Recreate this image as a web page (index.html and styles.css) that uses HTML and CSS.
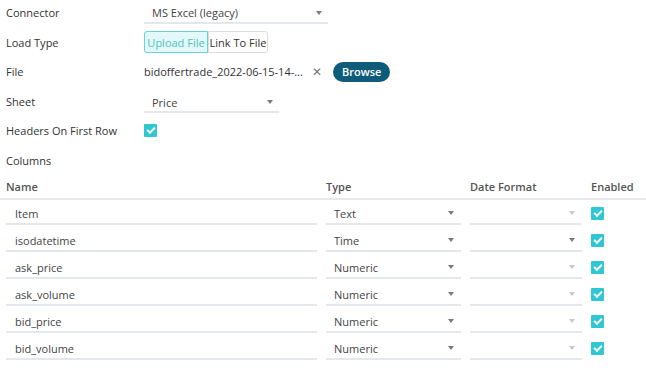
FILE: index.html
```html
<!DOCTYPE html>
<html lang="en">

<head>
    <meta charset="UTF-8">
    <title>Data Source Settings</title>
    <link rel="stylesheet" href="styles.css">
</head>

<body>
    <div class="settings">
        <div class="form-row">
            <div class="label">Connector</div>
            <div class="select wide">
                <span>MS Excel (legacy)</span>
                <span class="caret"></span>
            </div>
        </div>

        <div class="form-row">
            <div class="label">Load Type</div>
            <div class="toggle">
                <button class="toggle-btn active">Upload File</button><button class="toggle-btn">Link To File</button>
            </div>
        </div>

        <div class="form-row">
            <div class="label">File</div>
            <div class="file">
                <span class="file-name">bidoffertrade_2022-06-15-14-...</span>
                <span class="clear">&#x2715;</span>
                <button class="browse">Browse</button>
            </div>
        </div>

        <div class="form-row">
            <div class="label">Sheet</div>
            <div class="select sheet">
                <span>Price</span>
                <span class="caret"></span>
            </div>
        </div>

        <div class="form-row">
            <div class="label">Headers On First Row</div>
            <span class="check"></span>
        </div>

        <div class="form-row">
            <div class="label">Columns</div>
        </div>
    </div>

    <div class="columns">
        <div class="col-head">
            <div>Name</div>
            <div>Type</div>
            <div>Date Format</div>
            <div>Enabled</div>
        </div>

        <div class="col-row">
            <div class="field">Item</div>
            <div class="select"><span>Text</span><span class="caret"></span></div>
            <div class="select"><span></span><span class="caret off"></span></div>
            <span class="check"></span>
        </div>
        <div class="col-row">
            <div class="field">isodatetime</div>
            <div class="select"><span>Time</span><span class="caret"></span></div>
            <div class="select"><span></span><span class="caret"></span></div>
            <span class="check"></span>
        </div>
        <div class="col-row">
            <div class="field">ask_price</div>
            <div class="select"><span>Numeric</span><span class="caret"></span></div>
            <div class="select"><span></span><span class="caret off"></span></div>
            <span class="check"></span>
        </div>
        <div class="col-row">
            <div class="field">ask_volume</div>
            <div class="select"><span>Numeric</span><span class="caret"></span></div>
            <div class="select"><span></span><span class="caret off"></span></div>
            <span class="check"></span>
        </div>
        <div class="col-row">
            <div class="field">bid_price</div>
            <div class="select"><span>Numeric</span><span class="caret"></span></div>
            <div class="select"><span></span><span class="caret off"></span></div>
            <span class="check"></span>
        </div>
        <div class="col-row">
            <div class="field">bid_volume</div>
            <div class="select"><span>Numeric</span><span class="caret"></span></div>
            <div class="select"><span></span><span class="caret off"></span></div>
            <span class="check"></span>
        </div>
    </div>
</body>

</html>
```

FILE: styles.css
```css
* {
    margin: 0;
    padding: 0;
    box-sizing: border-box;
}

body {
    font-family: 'Open Sans', 'Noto Sans', sans-serif;
    font-size: 11px;
    color: #333;
    background: white;
    width: 646px;
    height: 370px;
    overflow: hidden;
}

.settings {
    margin-top: -2px;
    padding-left: 6px;
}

.form-row {
    display: flex;
    align-items: center;
    height: 29.5px;
}

.label {
    width: 138px;
    flex-shrink: 0;
}

.select {
    display: flex;
    align-items: center;
    justify-content: space-between;
    height: 20px;
    padding: 0 6px 0 8px;
    border-bottom: 2px solid #e4e7eb;
    color: #444;
}

.select.wide {
    width: 184px;
    margin-top: 2px;
}

.select.sheet {
    width: 135px;
    margin-top: 4px;
}

.caret {
    width: 0;
    height: 0;
    border-left: 3.5px solid transparent;
    border-right: 3.5px solid transparent;
    border-top: 4px solid #7a7a7a;
}

.caret.off {
    border-top-color: #c8c8c8;
}

.toggle {
    display: flex;
}

.toggle-btn {
    font: inherit;
    height: 22px;
    width: 60px;
    background: white;
    border: 1px solid #dcdcdc;
    border-radius: 0 3px 3px 0;
    color: #333;
}

.toggle-btn.active {
    width: 64px;
    background: #e3f8f8;
    border-color: #68d3d3;
    border-radius: 3px 0 0 3px;
    color: #4fc2c4;
}

.file {
    display: flex;
    align-items: center;
}

.file-name {
    width: 168px;
}

.clear {
    color: #777;
    font-size: 12px;
    width: 21px;
}

.browse {
    font: inherit;
    font-weight: 600;
    height: 20px;
    padding: 0 9px;
    border: none;
    border-radius: 10px;
    background: #0f5c7a;
    color: white;
}

.check {
    position: relative;
    display: inline-block;
    width: 13px;
    height: 13px;
    border-radius: 1px;
    background: #2fc7d4;
}

.check::after {
    content: '';
    position: absolute;
    left: 3px;
    top: 3px;
    width: 6px;
    height: 3px;
    border-left: 2px solid white;
    border-bottom: 2px solid white;
    transform: rotate(-45deg);
}

.columns {
    margin-top: -1px;
}

.col-head,
.col-row {
    display: grid;
    grid-template-columns: 311px 135px 112px auto;
    column-gap: 9px;
    align-items: center;
    padding-left: 6px;
}

.col-head {
    height: 26px;
    margin-left: -4px;
    padding-left: 10px;
    border-bottom: 2px solid #e6e8eb;
    font-weight: 600;
    color: #555;
}

.col-row {
    height: 27px;
}

.col-row .field,
.col-row .select {
    height: 21px;
    margin-top: 1px;
    display: flex;
    align-items: center;
    border-bottom: 2px solid #e4e7eb;
}

.col-row .field {
    padding-left: 9px;
    color: #444;
}

.col-row .select {
    padding-left: 8px;
    padding-right: 7px;
}
```
